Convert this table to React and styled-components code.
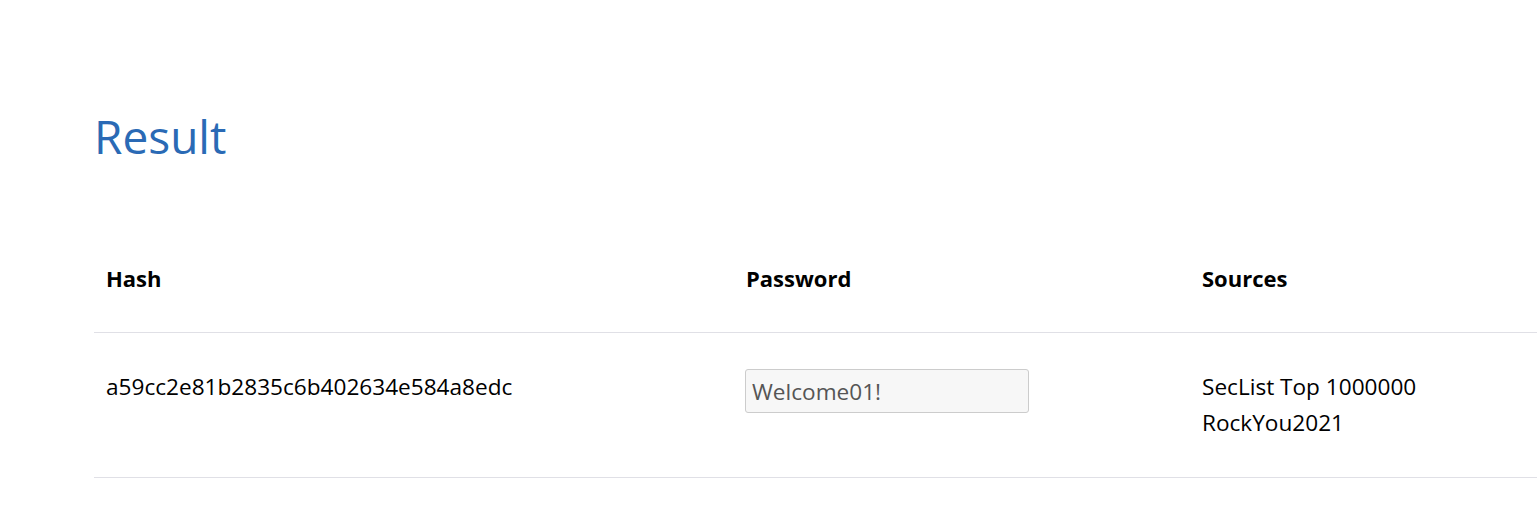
import React from "react";
import styled, { createGlobalStyle } from "styled-components";

const Global = createGlobalStyle`
  html, body { margin: 0; padding: 0; background: #fff; }
  body { font-family: "Open Sans", "Noto Sans", sans-serif; color: #000; }
`;

const Page = styled.main`
  padding: 100px 0 0 94px;
`;

const Title = styled.h1`
  margin: 0 0 52px 0;
  font-size: 46px;
  font-weight: 400;
  line-height: 72px;
  color: #2a6ab5;
`;

const Table = styled.table`
  width: 100%;
  border-collapse: collapse;
  font-size: 22.6px;
  line-height: 36px;
`;

const Th = styled.th`
  text-align: left;
  font-weight: 700;
  font-size: 22px;
  padding: 36px 12px;
  width: ${(p) => p.$w || "auto"};
  border-bottom: 1px solid #e0e0e6;
`;

const Td = styled.td`
  vertical-align: top;
  padding: 36px 12px;
  border-bottom: 1px solid #e0e0e6;
`;

const Line = styled.div``;

const PwInput = styled.input`
  box-sizing: border-box;
  width: 284px;
  height: 44px;
  margin-left: -1px;
  padding: 0 6px;
  background: #f7f7f7;
  border: 1px solid #cccccc;
  border-radius: 3px;
  font-family: inherit;
  font-size: 22.6px;
  color: #555;
  outline: none;
`;

export default function App() {
  return (
    <>
      <Global />
      <Page>
        <Title>Result</Title>
        <Table>
          <thead>
            <tr>
              <Th $w="616px">Hash</Th>
              <Th $w="432px">Password</Th>
              <Th>Sources</Th>
            </tr>
          </thead>
          <tbody>
            <tr>
              <Td>a59cc2e81b2835c6b402634e584a8edc</Td>
              <Td>
                <PwInput readOnly defaultValue="Welcome01!" />
              </Td>
              <Td>
                <Line>SecList Top 1000000</Line>
                <Line>RockYou2021</Line>
              </Td>
            </tr>
          </tbody>
        </Table>
      </Page>
    </>
  );
}
